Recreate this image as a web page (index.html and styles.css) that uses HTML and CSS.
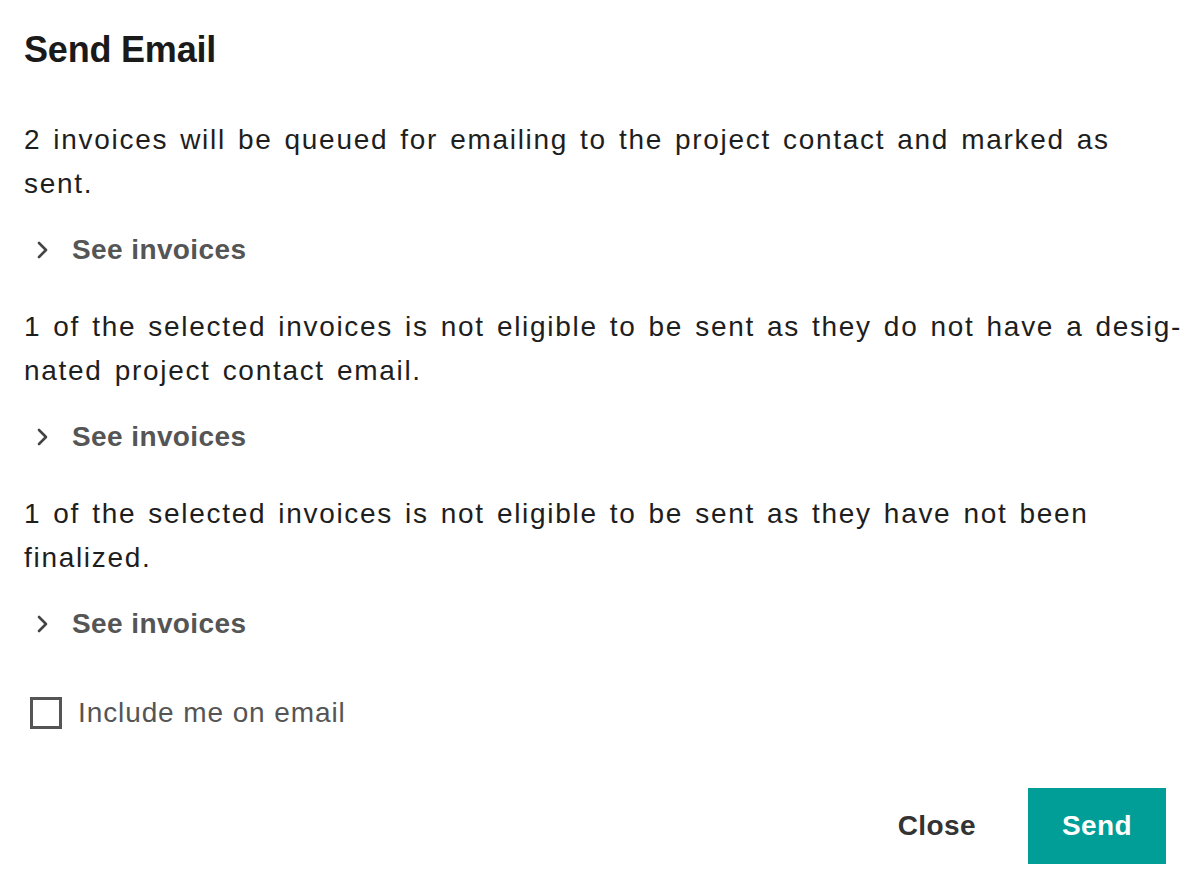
FILE: index.html
```html
<!DOCTYPE html>
<html lang="en">
<head>
    <meta charset="UTF-8">
    <meta name="viewport" content="width=device-width, initial-scale=1.0">
    <title>Send Email</title>
    <link rel="stylesheet" href="styles.css">
</head>
<body>
    <!-- Modal -->
    <div class="modal">
        <h1>Send Email</h1>

        <p class="msg">2 invoices will be queued for emailing to the project contact and marked as sent.</p>
        <div class="toggle">
            <svg class="chevron" viewBox="0 0 12 18" width="12" height="18"><path d="M2 2 L9 9 L2 16" fill="none" stroke="#444" stroke-width="2.6" stroke-linecap="round" stroke-linejoin="round"/></svg>
            <span>See invoices</span>
        </div>

        <p class="msg">1 of the selected invoices is not eligible to be sent as they do not have a desig&shy;nated project contact email.</p>
        <div class="toggle">
            <svg class="chevron" viewBox="0 0 12 18" width="12" height="18"><path d="M2 2 L9 9 L2 16" fill="none" stroke="#444" stroke-width="2.6" stroke-linecap="round" stroke-linejoin="round"/></svg>
            <span>See invoices</span>
        </div>

        <p class="msg">1 of the selected invoices is not eligible to be sent as they have not been finalized.</p>
        <div class="toggle">
            <svg class="chevron" viewBox="0 0 12 18" width="12" height="18"><path d="M2 2 L9 9 L2 16" fill="none" stroke="#444" stroke-width="2.6" stroke-linecap="round" stroke-linejoin="round"/></svg>
            <span>See invoices</span>
        </div>

        <label class="check">
            <span class="box"></span>
            <span>Include me on email</span>
        </label>

        <div class="actions">
            <button class="btn-close">Close</button>
            <button class="btn-send">Send</button>
        </div>
    </div>
</body>
</html>
```

FILE: styles.css
```css
/* General */
body { margin: 0; font-family: "Liberation Sans", Arial, sans-serif; background-color: white; color: #1c1c1c; }
.modal { padding: 28px 10px 24px 24px; }
h1 { margin: 0; font-size: 36px; line-height: 43px; font-weight: bold; color: #1a1a1a; letter-spacing: -0.2px; }
.msg { margin: 47px 0 0; font-size: 28px; line-height: 44px; color: #1e1e1e; hyphens: manual; letter-spacing: 1.7px; word-spacing: 2.6px; }
.toggle + .msg { margin-top: 33px; }
.toggle { margin-top: 22px; display: flex; align-items: center; font-size: 28px; line-height: 44px; font-weight: bold; color: #555; letter-spacing: 0.4px; }
.toggle .chevron { margin-left: 13px; margin-right: 23px; }
/* Checkbox */
.check { margin-top: 45px; display: flex; align-items: center; font-size: 28px; line-height: 44px; color: #555; letter-spacing: 0.9px; }
.check .box { width: 26px; height: 26px; border: 3px solid #555; margin-left: 6px; margin-right: 16px; }
/* Botones */
.actions { margin-top: 53px; margin-right: 16px; display: flex; justify-content: flex-end; align-items: center; }
.actions button { font-family: inherit; font-size: 28px; font-weight: bold; border: none; cursor: pointer; letter-spacing: 0.4px; }
.btn-close { background: none; color: #333; padding: 0 52px 0 0; }
.btn-send { background-color: #009e96; color: white; width: 138px; height: 76px; }
```
